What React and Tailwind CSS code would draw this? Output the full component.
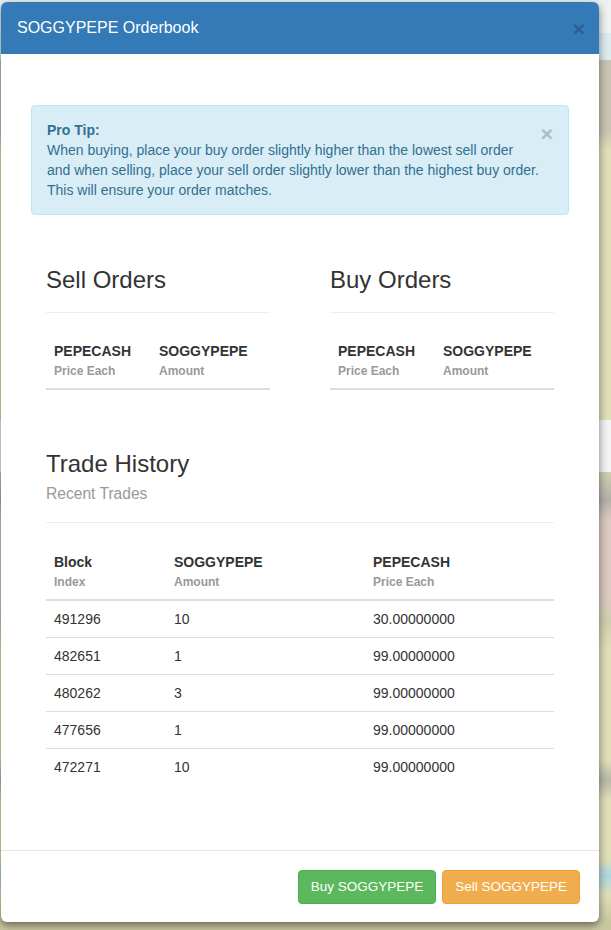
export default function App() {
  const trades = [
    ["491296", "10", "30.00000000"],
    ["482651", "1", "99.00000000"],
    ["480262", "3", "99.00000000"],
    ["477656", "1", "99.00000000"],
    ["472271", "10", "99.00000000"],
  ];

  const OrderTable = ({ title }) => (
    <div className="flex flex-col">
      <h3 className="text-[24px] leading-[26px] text-[#333] font-normal">{title}</h3>
      <div className="mt-[19px] h-px bg-[#eee]" />
      <div className="mt-[20px] grid grid-cols-[105px_1fr] border-b-2 border-[#ddd]">
        <div className="px-[8px] pt-[8px] pb-[7px]">
          <div className="text-[14px] leading-[20px] font-bold text-[#333]">PEPECASH</div>
          <div className="text-[12px] leading-[20px] font-bold text-[#999]">Price Each</div>
        </div>
        <div className="px-[8px] pt-[8px] pb-[7px]">
          <div className="text-[14px] leading-[20px] font-bold text-[#333]">SOGGYPEPE</div>
          <div className="text-[12px] leading-[20px] font-bold text-[#999]">Amount</div>
        </div>
      </div>
    </div>
  );

  return (
    <div className="w-[611px] h-[930px] overflow-hidden font-['Liberation_Sans',Arial,sans-serif] bg-[linear-gradient(to_bottom,#eef2f0_0px,#eef2f0_33px,#dcecee_33px,#dcecee_60px,#c8c5b3_60px,#c8c5b3_130px,#dfdfb8_150px,#dfdfb8_420px,#f4f4f4_420px,#f4f4f4_472px,#cfcfb0_472px,#b4b0aa_500px,#dccac0_520px,#dccac0_600px,#cfcfb0_620px,#dfdfb8_650px,#dfdfb8_760px,#b8b8a8_780px,#dfdfb8_800px,#dfdfb8_860px,#a8d8e0_875px,#dfdfb8_895px,#c8c8a0_922px)] pt-[2px] pl-[1px]">
      <div className="w-[598px] h-[920px] bg-white rounded-[6px] overflow-hidden shadow-[0_3px_9px_rgba(0,0,0,0.5)] flex flex-col">
        <div className="h-[52px] bg-[#337ab7] flex items-center justify-between pl-[16px] pr-[14px]">
          <span className="text-white text-[16px] leading-[20px]">SOGGYPEPE Orderbook</span>
          <span className="text-[21px] font-bold leading-none text-[#295f92]">×</span>
        </div>

        <div className="flex-1 px-[30px] pt-[51px]">
          <div className="rounded-[4px] border border-[#bce8f1] bg-[#d9edf7] text-[#31708f] px-[15px] py-[14px] text-[14px] leading-[20px] relative">
            <span className="absolute right-[15px] top-[14px] text-[21px] font-bold leading-[28px] text-[#a9bcc6]">×</span>
            <div className="font-bold">Pro Tip:</div>
            <div>When buying, place your buy order slightly higher than the lowest sell order</div>
            <div>and when selling, place your sell order slightly lower than the highest buy order.</div>
            <div>This will ensure your order matches.</div>
          </div>

          <div className="px-[15px]">
            <div className="mt-[52px] grid grid-cols-[224px_224px] justify-between">
              <OrderTable title="Sell Orders" />
              <OrderTable title="Buy Orders" />
            </div>

            <h3 className="mt-[61px] text-[24px] leading-[26px] text-[#333] font-normal">Trade History</h3>
            <div className="mt-[7px] text-[15.6px] leading-[20px] text-[#999]">Recent Trades</div>
            <div className="mt-[18px] h-px bg-[#eee]" />

            <div className="mt-[21px] text-[14px] leading-[20px] text-[#333]">
              <div className="grid grid-cols-[120px_199px_1fr] border-b-2 border-[#ddd]">
                <div className="px-[8px] pt-[8px] pb-[7px]">
                  <div className="font-bold">Block</div>
                  <div className="text-[12px] font-bold text-[#999]">Index</div>
                </div>
                <div className="px-[8px] pt-[8px] pb-[7px]">
                  <div className="font-bold">SOGGYPEPE</div>
                  <div className="text-[12px] font-bold text-[#999]">Amount</div>
                </div>
                <div className="px-[8px] pt-[8px] pb-[7px]">
                  <div className="font-bold">PEPECASH</div>
                  <div className="text-[12px] font-bold text-[#999]">Price Each</div>
                </div>
              </div>
              {trades.map((t, i) => (
                <div
                  key={t[0]}
                  className={
                    i === 0
                      ? "grid grid-cols-[120px_199px_1fr]"
                      : "grid grid-cols-[120px_199px_1fr] border-t border-[#ddd]"
                  }
                >
                  <div className="p-[8px]">{t[0]}</div>
                  <div className="p-[8px]">{t[1]}</div>
                  <div className="p-[8px]">{t[2]}</div>
                </div>
              ))}
            </div>
          </div>
        </div>

        <div className="border-t border-[#e5e5e5] h-[72px] flex items-start justify-end gap-[6px] pt-[19px] pr-[19px]">
          <button className="h-[34px] px-[12px] rounded-[4px] bg-[#5cb85c] border border-[#4cae4c] text-white text-[13.5px] leading-[20px]">
            Buy SOGGYPEPE
          </button>
          <button className="h-[34px] px-[12px] rounded-[4px] bg-[#f0ad4e] border border-[#eea236] text-white text-[13.5px] leading-[20px]">
            Sell SOGGYPEPE
          </button>
        </div>
      </div>
    </div>
  );
}
